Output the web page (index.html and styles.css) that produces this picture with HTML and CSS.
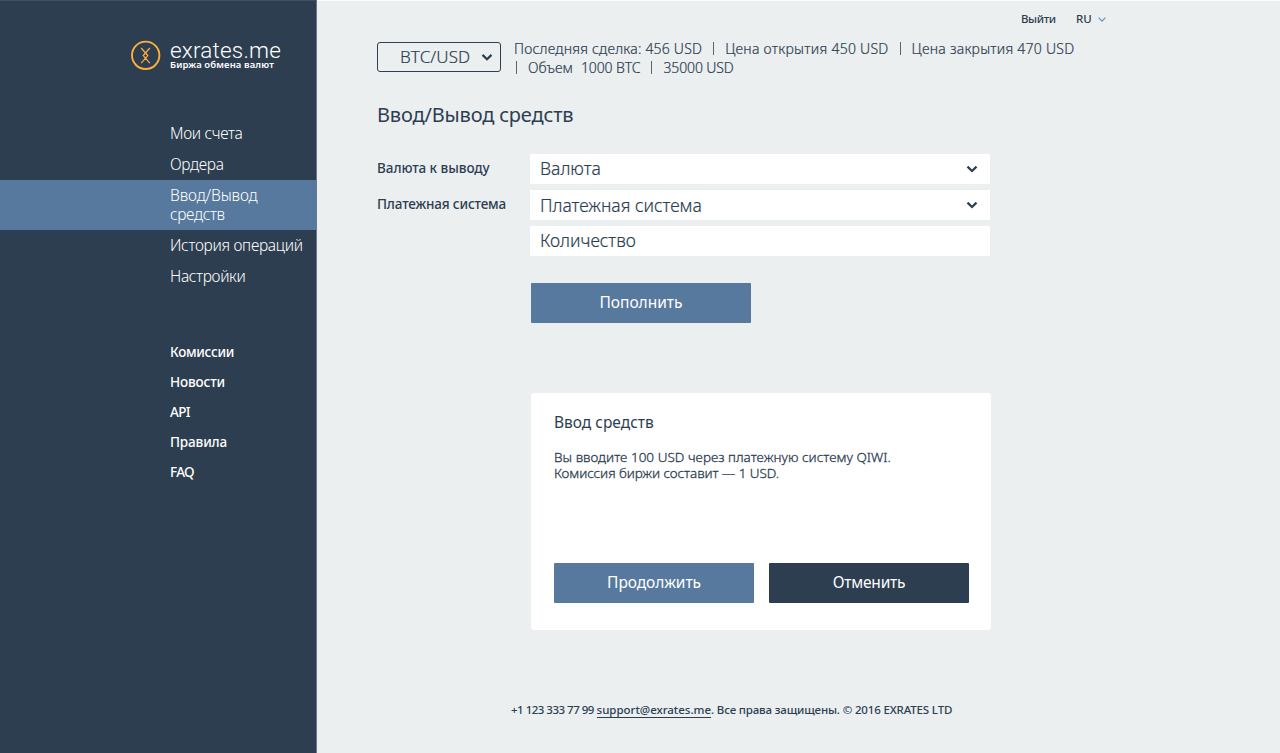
FILE: index.html
```html
<!DOCTYPE html>
<html lang="ru">
<head>
<meta charset="utf-8">
<title>exrates.me</title>
<link rel="stylesheet" href="styles.css">
</head>
<body>
<aside class="sidebar">
  <a class="logo">
    <svg class="logo-mark" width="30" height="30" viewBox="0 0 30 30" fill="none" stroke="#ffb03b">
      <circle cx="14.7" cy="15.3" r="13.7" stroke-width="1.9"/>
      <path d="M10.2 8 14.5 13l4.3-5M10.2 23.2l4.3-5 4.3 5M14.5 13l2.3 2.6-2.3 2.6-2.3-2.6z" stroke-width="1.2"/>
    </svg>
    <span class="logo-words">
      <span class="logo-name">exrates.me</span>
      <span class="logo-tag">Биржа обмена валют</span>
    </span>
  </a>
  <nav class="menu">
    <a class="menu-item"><span class="m1">Мои счета</span></a>
    <a class="menu-item"><span class="m2">Ордера</span></a>
    <a class="menu-item active"><span class="m3">Ввод/Вывод</span><span class="m3b">средств</span></a>
    <a class="menu-item"><span class="m4">История операций</span></a>
    <a class="menu-item"><span class="m5">Настройки</span></a>
  </nav>
  <nav class="links">
    <a class="l1">Комиссии</a>
    <a class="l2">Новости</a>
    <a class="l3">API</a>
    <a class="l4">Правила</a>
    <a class="l5">FAQ</a>
  </nav>
</aside>
<main class="main">
  <div class="topbar">
    <a class="logout">Выйти</a>
    <a class="lang">RU</a>
    <svg width="8" height="5" viewBox="0 0 8 5" fill="none" stroke="#5d8fbf" stroke-width="1.1"><path d="M.6.7 4 4.1 7.4.7"/></svg>
  </div>
  <header class="ticker">
    <div class="pair"><span class="p1">BTC/USD</span><svg class="chev" width="12" height="8" viewBox="0 0 12 8"><path d="M1.5 1.9 6 6.3l4.5-4.4"/></svg></div>
    <div class="stats">
      <div class="stats-row"><span class="s1">Последняя сделка: 456 USD</span><i></i><span class="s2">Цена открытия 450 USD</span><i></i><span class="s3">Цена закрытия 470 USD</span></div>
      <div class="stats-row second"><i></i><span class="s4">Объем</span><span class="s5">1000 BTC</span><i></i><span class="s6">35000 USD</span></div>
    </div>
  </header>
  <h1 class="title">Ввод/Вывод средств</h1>
  <form class="form">
    <label class="label lb1">Валюта к выводу</label>
    <div class="field"><span class="f1">Валюта</span><svg class="chev" width="12" height="8" viewBox="0 0 12 8"><path d="M1.5 1.6 6 6l4.5-4.4"/></svg></div>
    <label class="label lb2">Платежная система</label>
    <div class="field"><span class="f2">Платежная система</span><svg class="chev" width="12" height="8" viewBox="0 0 12 8"><path d="M1.5 1.6 6 6l4.5-4.4"/></svg></div>
    <div class="field last"><span class="f3">Количество</span></div>
  </form>
  <a class="btn submit"><span class="b1">Пополнить</span></a>
  <section class="dialog">
    <h2 class="dialog-title">Ввод средств</h2>
    <p class="dialog-text"><span class="d1">Вы вводите 100 USD через платежную систему QIWI.</span><br><span class="d2">Комиссия биржи составит — 1 USD.</span></p>
    <div class="actions">
      <a class="btn"><span class="b2">Продолжить</span></a>
      <a class="btn dark"><span class="b3">Отменить</span></a>
    </div>
  </section>
  <footer class="footer"><span class="t1">+1 123 333 77 99</span><a class="mail">support@exrates.me</a><span class="t2">. Все права защищены. © 2016 EXRATES LTD</span></footer>
</main>
</body>
</html>
```
FILE: styles.css
```css
* { box-sizing: border-box; }
body {
  margin: 0;
  height: 753px;
  display: flex;
  overflow: hidden;
  background: #ebeff0;
  color: #2d3e50;
  font-family: "Noto Sans", "Open Sans", sans-serif;
  white-space: nowrap;
}
.sidebar {
  flex: none;
  width: 317px;
  background: #2d3e50;
  color: #fff;
  border-top: 1px solid #42515f;
  border-right: 1px solid #6c7885;
}
.logo { display: flex; gap: 9px; padding: 39px 0 0 131px; height: 117px; }
.logo-mark { flex: none; }
.logo-words { display: flex; flex-direction: column; }
.logo-name { font: 300 22.5px/20px Roboto, sans-serif; letter-spacing: .2px; }
.logo-tag { font-size: 9.5px; font-weight: 600; line-height: 10px; letter-spacing: .12px; }
.menu-item {
  display: block;
  padding: 6px 0 6px 170px;
  font-size: 15.5px;
  font-weight: 300;
  line-height: 19px;
}
.active { display: flex; flex-direction: column; height: 50px; background: #57799e; }
.m1, .m2, .m3b, .m5 { letter-spacing: -.33px; }
.m3 { letter-spacing: -.1px; }
.m4 { letter-spacing: -.28px; }
.links {
  display: flex;
  flex-direction: column;
  padding: 45px 0 0 170px;
  font-size: 13.5px;
  font-weight: 500;
  line-height: 30px;
}
.l1 { letter-spacing: -.3px; }
.l2, .l4 { letter-spacing: -.15px; }
.l3, .l5 { letter-spacing: -.7px; }
.main {
  flex: 1;
  border-top: 1px solid #fdfdfd;
  padding-left: 60px;
}
.topbar {
  display: flex;
  align-items: center;
  height: 36px;
  padding-left: 644px;
  font-size: 11.5px;
  font-weight: 550;
}
.logout { width: 55px; letter-spacing: -.4px; margin-top: -1px; }
.lang { width: 22px; font-weight: 500; margin-top: -1px; }
.ticker { display: flex; height: 64px; padding-top: 5px; }
.pair {
  width: 124px;
  height: 30px;
  border: 1px solid #2d3e50;
  border-radius: 3px;
  display: flex;
  align-items: center;
  justify-content: space-between;
  padding: 0 7px 0 22px;
  font-size: 17px;
  font-weight: 300;
}
.p1 { margin-top: -2px; letter-spacing: .1px; }
.chev { fill: none; stroke: #2d3e50; stroke-width: 2.2; }
.stats { padding: 0 0 0 13px; margin-top: -3px; font-size: 14px; font-weight: 300; }
.pair, .stats, .field { -webkit-text-stroke: .2px #2d3e50; }
.stats-row { display: flex; align-items: center; height: 19px; }
.stats-row i { width: 1px; height: 13px; background: #566473; margin: 0 11px; }
.second i:first-child { margin-left: 2px; }
.s1 { letter-spacing: .21px; }
.s2 { letter-spacing: .27px; }
.s3 { letter-spacing: .25px; }
.s5 { margin-left: 8px; letter-spacing: -.1px; }
.s6 { letter-spacing: -.13px; }
.title { margin: 0; font-size: 20px; font-weight: 400; line-height: 28px; letter-spacing: -.17px; }
.form {
  display: grid;
  grid-template-columns: 152.5px 460.5px;
  grid-auto-rows: 30px;
  row-gap: 6px;
  padding-top: 25px;
}
.label { font-size: 13.5px; font-weight: 500; line-height: 28px; }
.lb1 { letter-spacing: -.06px; }
.lb2 { letter-spacing: -.16px; }
.field {
  background: #fff;
  display: flex;
  align-items: center;
  justify-content: space-between;
  padding: 0 12px 0 10.5px;
  font-size: 17.5px;
  font-weight: 300;
}
.f1, .f3 { margin-top: -2px; }
.last { grid-column: 2; }
.btn {
  display: flex;
  align-items: center;
  justify-content: center;
  width: 200px;
  height: 40px;
  padding-bottom: 2px;
  background: #57799e;
  color: #fff;
  border-radius: 1px;
  font-size: 15.5px;
}
.b2 { letter-spacing: -.08px; }
.b3 { letter-spacing: -.2px; }
.dark { background: #2d3e50; }
.submit { width: 220px; margin: 27px 0 0 154px; }
.dialog {
  width: 460px;
  height: 237px;
  margin: 70px 0 0 154px;
  padding: 18px 22px 0 23px;
  background: #fff;
  border-radius: 3px;
}
.dialog-title { margin: 0; font-size: 15.5px; font-weight: 400; line-height: 22px; }
.dialog-text {
  margin: 16px 0 0;
  height: 114.4px;
  font-size: 13.5px;
  font-weight: 300;
  line-height: 16px;
  -webkit-text-stroke: .3px #2d3e50;
}
.d1 { letter-spacing: .02px; }
.d2 { letter-spacing: -.08px; }
.actions { display: flex; justify-content: space-between; }
.footer { display: flex; padding: 71.6px 0 0 134px; font-size: 11.5px; font-weight: 480; line-height: 16px; }
.t1 { width: 83px; letter-spacing: -.5px; }
.t2 { letter-spacing: -.15px; }
.mail { border-bottom: 1px solid #2d3e50; margin-left: 2.6px; height: 16px; line-height: 16px; letter-spacing: -.02px; }
```
